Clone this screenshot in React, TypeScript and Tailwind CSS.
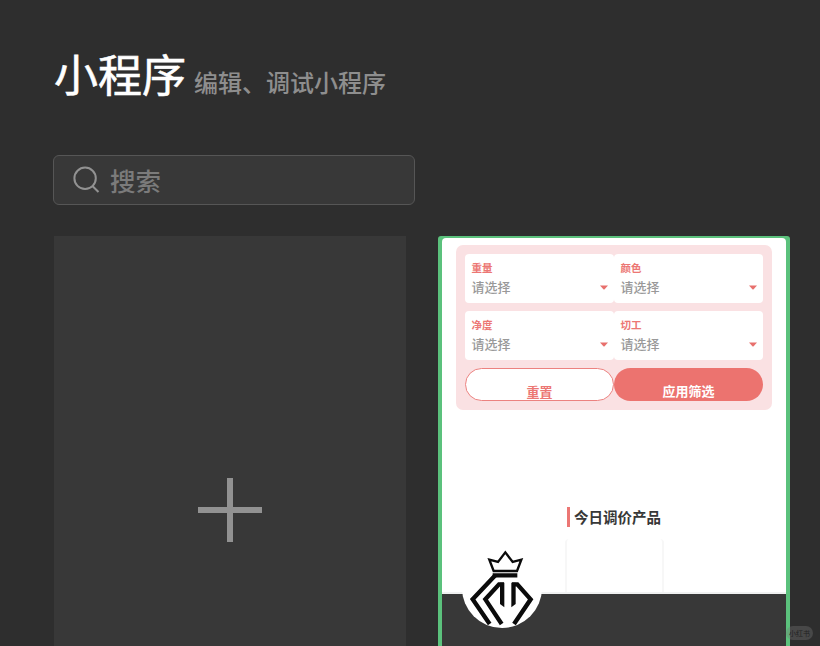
import React from 'react';
import { clsx } from 'clsx';

const filters = [
  { label: '重量', placeholder: '请选择' },
  { label: '颜色', placeholder: '请选择' },
  { label: '净度', placeholder: '请选择' },
  { label: '切工', placeholder: '请选择' },
];

function SearchIcon() {
  return (
    <svg className="w-7 h-7 shrink-0" viewBox="0 0 28 28" fill="none" stroke="#929292" strokeWidth="2">
      <circle cx="13.1" cy="12.3" r="10.7" />
      <path d="M20.4 20 L26.5 26" />
    </svg>
  );
}

function CrownLogo() {
  return (
    <svg className="block w-20 h-20" viewBox="0 0 240 240" fill="none" stroke="#0b0b0b">
      {/* crown */}
      <path d="M82 35 L108 42 L130 13 L152 42 L178 35 L165 69 L95 69 Z" strokeWidth="7" />
      <path d="M92 82 H166" strokeWidth="13" />
      {/* faceted diamond */}
      <path d="M100 82 L32 154 L83 228" strokeWidth="13" />
      <path d="M126 109 H111 L70 154 L119 228" strokeWidth="13" />
      <path d="M114 104 H127 V178 L114 168 Z" fill="#0b0b0b" stroke="none" />
      <path d="M148 104 H161 V168 L148 178 Z" fill="#0b0b0b" stroke="none" />
      <path d="M150 109 H166 L206 154 L156 228" strokeWidth="13" />
    </svg>
  );
}

function FilterField({ label, placeholder }: { label: string; placeholder: string }) {
  return (
    <div className="h-[49px] rounded-[4px] bg-white pl-[6.5px] pr-[6px] pt-[6px]">
      <div className="text-[10.5px] leading-[16px] font-bold text-[#ec7774]">{label}</div>
      <div className="flex items-center justify-between">
        <span className="text-[13px] leading-[22px] font-medium text-[#999999]">{placeholder}</span>
        <svg className="w-2 h-[5px]" viewBox="0 0 8 5" fill="#e8706d">
          <path d="M0 0.5 H8 L4.6 4.3 Q4 4.8 3.4 4.3 Z" />
        </svg>
      </div>
    </div>
  );
}

function ProjectCard() {
  return (
    <div className="relative w-[352px] h-[410px] rounded-t-[3px] border-x-4 border-t-2 border-[#5bc17c] bg-[#5bc17c]">
      <div className="h-[356px] rounded-t-[4px] bg-white border-b-2 border-[#f0f1f1] pt-[7px] flex flex-col">
        <div className="ml-[14px] w-[316px] h-[165px] rounded-[7px] bg-[#fae1e3] px-[9px] pt-[9px]">
          <div className="grid grid-cols-2 gap-y-[8px]">
            {filters.map((filter) => (
              <FilterField key={filter.label} label={filter.label} placeholder={filter.placeholder} />
            ))}
          </div>
          <div className="grid grid-cols-2 mt-[8px]">
            {['重置', '应用筛选'].map((text, index) => (
              <div
                key={text}
                className={clsx(
                  'h-[33px] rounded-full text-center text-[13px] font-bold leading-[20px] overflow-hidden pt-[13px]',
                  index === 0
                    ? 'bg-white border border-[#ec8280] text-[#ec7774]'
                    : 'bg-[#ec736f] text-white'
                )}
              >
                {text}
              </div>
            ))}
          </div>
        </div>

        <div className="mt-[96px] ml-[125px] flex items-center h-[22px]">
          <div className="w-[3px] h-5 bg-[#ec7774]" />
          <span className="ml-1 pb-px text-[14.5px] leading-[21px] font-bold text-[#383838]">今日调价产品</span>
        </div>
        <div className="mt-[11px] ml-[123px] w-[99px] flex-1 border-x-2 border-[#f7f7f7] rounded-t-[4px]" />
      </div>
      <div className="h-[52px] bg-[#383838]" />

      <div className="absolute left-[20px] top-[310px] w-20 h-20 rounded-full bg-white overflow-hidden">
        <CrownLogo />
      </div>
    </div>
  );
}

export default function App() {
  return (
    <div className="relative w-[820px] h-[646px] overflow-hidden bg-[#2e2e2e] font-['Noto_Sans_CJK_SC',sans-serif]">
      <header className="pl-[54px] pt-[41px] h-[155px] flex items-baseline">
        <h1 className="text-[44px] leading-[64px] text-white [-webkit-text-stroke:0.6px_#ffffff]">小程序</h1>
        <span className="ml-[8px] text-[24px] font-medium text-[#8e8e8e]">编辑、调试小程序</span>
      </header>

      <div className="ml-[53px] w-[362px] h-[50px] rounded-[6px] border border-[#565656] bg-[#383838] flex items-center pl-[18px]">
        <SearchIcon />
        <span className="ml-[10px] text-[25.5px] leading-[48px] font-medium text-[#7b7b7b]">搜索</span>
      </div>

      <main className="mt-[31px] ml-[54px] flex gap-8">
        <div className="w-[352px] h-[410px] bg-[#383838] pt-[242px] flex justify-center items-start">
          <svg className="w-16 h-16" viewBox="0 0 64 64" stroke="#929292" strokeWidth="6">
            <path d="M0 32 H64 M32 0 V64" />
          </svg>
        </div>
        <ProjectCard />
      </main>

      <div className="absolute left-[786px] top-[626px] w-[27px] h-[14px] rounded-full bg-[#777777]/35 text-center text-[7px] leading-[14px] text-[#222222]">
        小红书
      </div>
    </div>
  );
}
